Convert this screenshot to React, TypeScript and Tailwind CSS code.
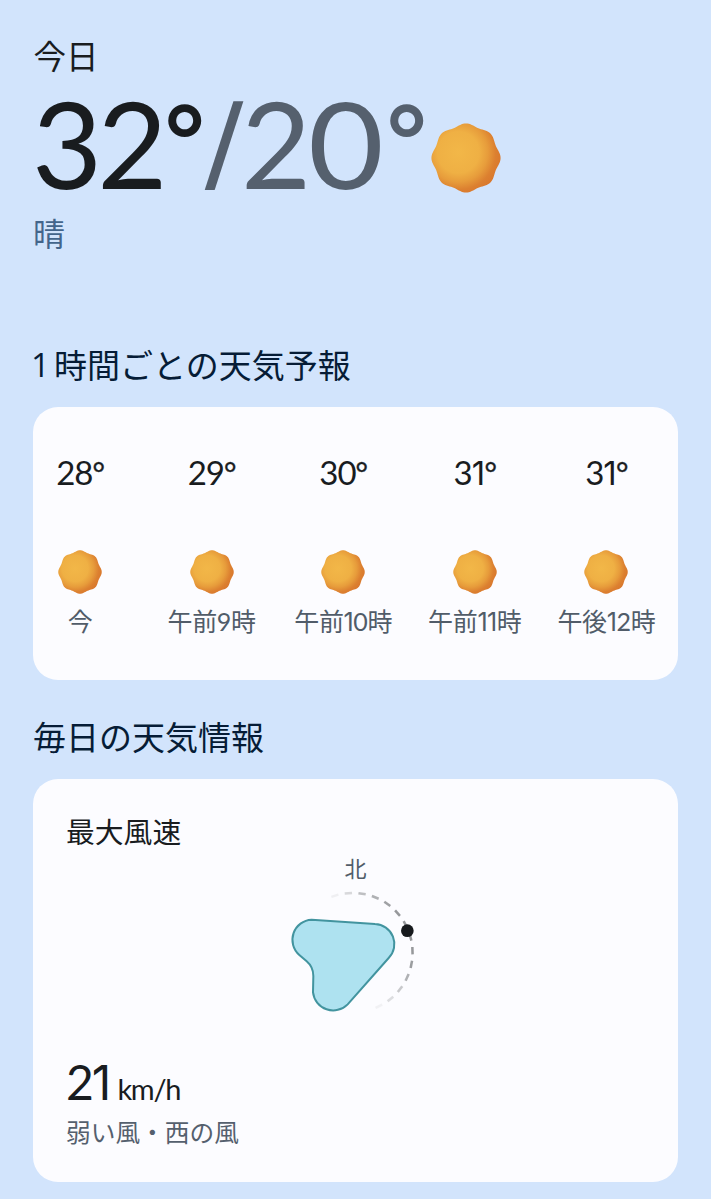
import React from "react";

const hours = [
  { temp: "28", label: "今" },
  { temp: "29", label: "午前9時" },
  { temp: "30", label: "午前10時" },
  { temp: "31", label: "午前11時" },
  { temp: "31", label: "午後12時" },
];

// Eight-lobed outline, one lobe pointing straight up.
const sunPath =
  Array.from({ length: 144 }, (_, i) => {
    const a = (i / 144) * Math.PI * 2;
    const r = 47.7 + 1.7 * Math.cos(8 * a);
    return `${i ? "L" : "M"}${(50 + r * Math.sin(a)).toFixed(2)} ${(50 - r * Math.cos(a)).toFixed(2)}`;
  }).join("") + "Z";

function Sun({ id, className }: { id: string; className: string }) {
  return (
    <svg viewBox="0 0 100 100" className={className}>
      <defs>
        <radialGradient id={id} gradientUnits="userSpaceOnUse" cx="39" cy="42" r="62">
          <stop offset="0" stopColor="#f2b748" />
          <stop offset="0.48" stopColor="#efb044" />
          <stop offset="0.68" stopColor="#e79c3b" />
          <stop offset="0.86" stopColor="#dc8030" />
          <stop offset="1" stopColor="#d9782d" />
        </radialGradient>
      </defs>
      <path d={sunPath} fill={`url(#${id})`} />
    </svg>
  );
}

const dashOpacity = [0.12, 0.35, 0.6, 0.75, 0.9, 1, 1, 1, 1, 0.95, 0.75, 0.5, 0.3, 0.1];

function WindDial() {
  return (
    <svg viewBox="0 0 510 450" className="-ml-[2px] h-[150px] w-[170px]">
      <g stroke="#96989b" strokeWidth="7.5">
        {dashOpacity.map((opacity, i) => (
          <path
            key={i}
            d="M-11 -179H11"
            opacity={opacity}
            transform={`translate(248.5 218) rotate(${-17.5 + i * 13.2})`}
          />
        ))}
      </g>
      <path
        d="M125 119L315 132A60 60 0 0 1 356 234L233 373A61 61 0 0 1 129 337L130 288Q130 261 110 244L88 225A60.500 60.500 0 0 1 125 119Z"
        fill="#aee2f0"
        stroke="#42949f"
        strokeWidth="6"
      />
      <circle cx="412" cy="152" r="19" fill="#171a1d" />
    </svg>
  );
}

// The plain, footless "1" comes from a different face than the round digits.
function Digits({ text }: { text: string }) {
  return (
    <>
      {text.split(/(1+)/).map((part, i) =>
        part.startsWith("1") ? (
          <span key={i} className="font-[Inter] leading-none tracking-[-0.02em]">
            {part}
          </span>
        ) : (
          part
        ),
      )}
    </>
  );
}

export default function App() {
  return (
    <main className="flex min-h-[1199px] w-[711px] flex-col bg-[#d2e4fc] px-[33px] pb-[17px] font-[Lato,'Noto_Sans_CJK_JP',sans-serif] text-[#191c1f]">
      <header className="flex h-[340px] flex-col pt-[36px]">
        <div className="h-[41px] pl-[0.5px] text-[32.5px] leading-[41px]">今日</div>
        <div className="flex h-[129px] items-center whitespace-nowrap text-[121px] leading-[100px]">
          <span className="-ml-px w-[133px] pt-[2px] tracking-[-5px]">32</span>
          <span className="-mt-[10px] w-[37px] text-[95px] [-webkit-text-stroke:2px_#191c1f]">°</span>
          <span className="w-[39px] origin-left scale-x-120 font-[Inter] text-[102px] text-[#55606e]">/</span>
          <span className="w-[67px] pt-[2px] text-[#55606e]">2</span>
          <span className="w-[79px] origin-left scale-x-108 pt-[2px] text-[#55606e]">0</span>
          <span className="-mt-[10px] w-[44px] text-[95px] text-[#55606e] [-webkit-text-stroke:2px_#55606e]">°</span>
          <Sun id="sun-now" className="mt-[32px] h-[70px] w-[70px] shrink-0" />
        </div>
        <div className="mt-[8px] text-[32px] leading-[40px] text-[#43658b]">晴</div>
      </header>

      <h2 className="flex h-[67px] gap-[9px] whitespace-nowrap text-[33px] leading-[50px] text-[#061c36]">
        <span className="-ml-[2px] w-[14px] font-['Open_Sans'] tracking-[-4px]">1</span>
        <span>時間ごとの天気予報</span>
      </h2>
      <section className="flex h-[273px] rounded-[25px] bg-[#fcfcff] pt-[45px]">
        <div className="-ml-[18.8px] flex">
          {hours.map((hour, i) => (
            <div key={i} className="flex w-[131.6px] shrink-0 flex-col items-center whitespace-nowrap">
              <div className="h-[42px] text-[33px] leading-[40px] tracking-[-1px]">
                <Digits text={hour.temp} />
                <span className="text-[30px] leading-none [-webkit-text-stroke:0.4px_#191c1f]">°</span>
              </div>
              <Sun id={`sun-${i}`} className="mt-[56px] h-[44px] w-[44px]" />
              <div className="mt-[8px] h-[40px] text-[25px] leading-[38px] tracking-[-0.3px] text-[#515c69]">
                <Digits text={hour.label} />
              </div>
            </div>
          ))}
        </div>
      </section>

      <h2 className="flex h-[99px] items-center whitespace-nowrap pt-[15px] text-[33px] leading-[50px] text-[#061c36]">
        毎日の天気情報
      </h2>
      <section className="flex h-[403px] flex-col rounded-[25px] bg-[#fcfcff] px-[33px] pt-[33px]">
        <h3 className="text-[28.8px] leading-[40px]">最大風速</h3>
        <div className="flex flex-col items-center">
          <div className="h-[28px] text-[22px] leading-[34px] text-[#515c69]">北</div>
          <WindDial />
        </div>
        <div className="mt-[25px] flex h-[54px] items-baseline gap-[7px] whitespace-nowrap leading-[54px]">
          <span className="text-[48px] tracking-[-2px]">
            <Digits text="21" />
          </span>
          <span className="text-[29px] tracking-[-1.3px]">km/h</span>
        </div>
        <div className="mt-[4px] text-[24.7px] leading-[40px] text-[#55606e]">弱い風・西の風</div>
      </section>
    </main>
  );
}
